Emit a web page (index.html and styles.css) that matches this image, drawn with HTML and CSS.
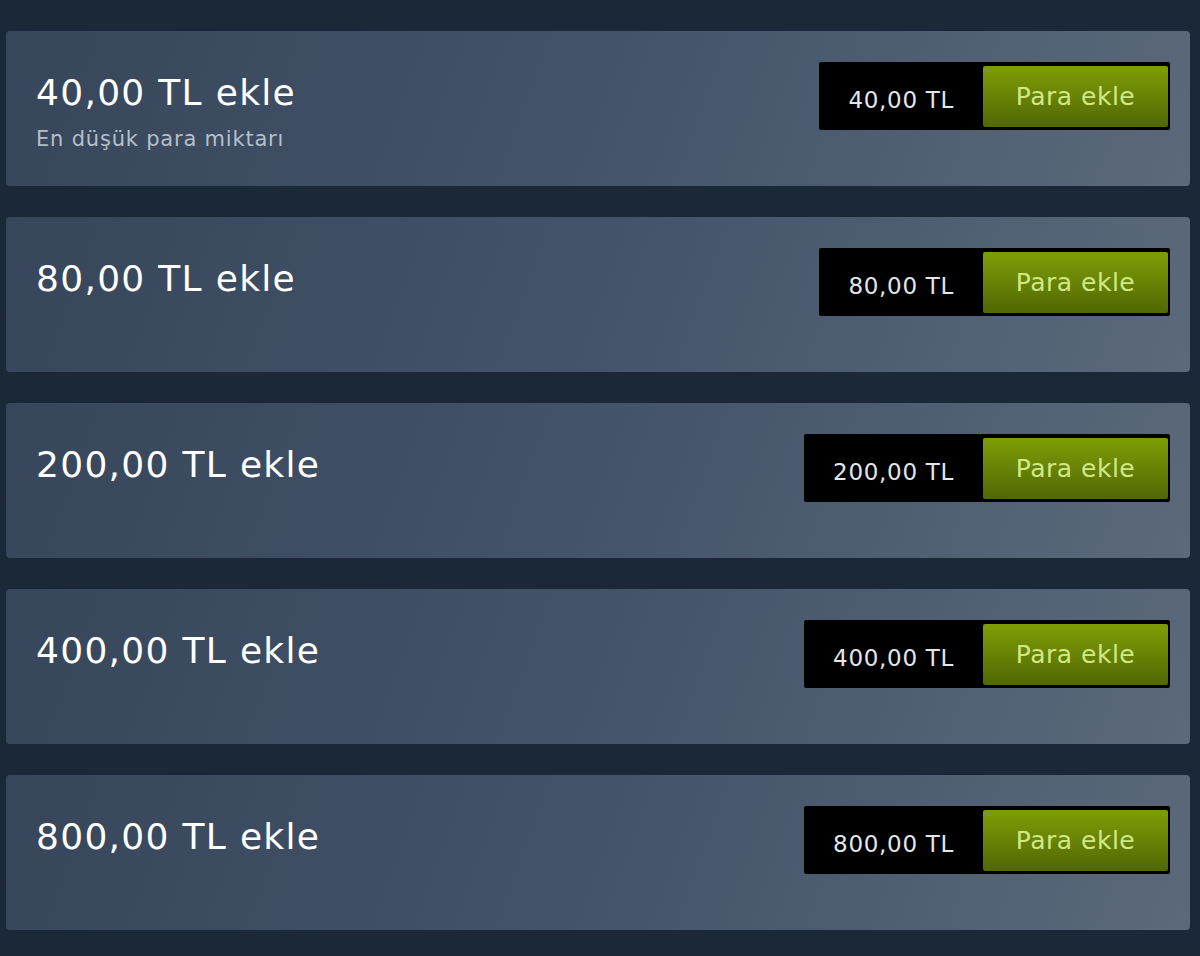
FILE: index.html
```html
<!DOCTYPE html>
<html lang="tr">
<head>
    <meta charset="UTF-8">
    <meta name="viewport" content="width=device-width, initial-scale=1.0">
    <title>Steam cüzdanına para ekle</title>
    <link rel="stylesheet" href="styles.css">
</head>
<body>
    <div class="wallet-list">
        <div class="wallet-item">
            <div class="wallet-info">
                <h2>40,00 TL ekle</h2>
                <p class="wallet-note">En düşük para miktarı</p>
            </div>
            <div class="purchase-box">
                <span class="price">40,00 TL</span>
                <a href="#" class="btn-green">Para ekle</a>
            </div>
        </div>
        <div class="wallet-item">
            <div class="wallet-info">
                <h2>80,00 TL ekle</h2>
            </div>
            <div class="purchase-box">
                <span class="price">80,00 TL</span>
                <a href="#" class="btn-green">Para ekle</a>
            </div>
        </div>
        <div class="wallet-item">
            <div class="wallet-info">
                <h2>200,00 TL ekle</h2>
            </div>
            <div class="purchase-box">
                <span class="price">200,00 TL</span>
                <a href="#" class="btn-green">Para ekle</a>
            </div>
        </div>
        <div class="wallet-item">
            <div class="wallet-info">
                <h2>400,00 TL ekle</h2>
            </div>
            <div class="purchase-box">
                <span class="price">400,00 TL</span>
                <a href="#" class="btn-green">Para ekle</a>
            </div>
        </div>
        <div class="wallet-item">
            <div class="wallet-info">
                <h2>800,00 TL ekle</h2>
            </div>
            <div class="purchase-box">
                <span class="price">800,00 TL</span>
                <a href="#" class="btn-green">Para ekle</a>
            </div>
        </div>
    </div>
</body>
</html>
```

FILE: styles.css
```css
/* Page */
body {
  margin: 0;
  background-color: #1b2838;
  font-family: "DejaVu Sans", Verdana, sans-serif;
  color: #ffffff;
}

.wallet-list {
  padding: 31px 10px 0 6px;
}

/* Each amount row */
.wallet-item {
  display: flex;
  justify-content: space-between;
  align-items: flex-start;
  height: 155px;
  box-sizing: border-box;
  margin-bottom: 31px;
  padding: 31px 20px 0 30px;
  border-radius: 4px;
  background: linear-gradient(110deg, #37465a 0%, #43536a 50%, #5b697a 100%);
}

.wallet-info h2 {
  margin: 0;
  padding-top: 11px;
  font-size: 36px;
  font-weight: 400;
  line-height: 40px;
  letter-spacing: 1.3px;
  color: #ffffff;
}

.wallet-note {
  margin: 13px 0 0;
  font-size: 21px;
  line-height: 26px;
  letter-spacing: 0.8px;
  color: #b4bfcb;
}

/* Price + button */
.purchase-box {
  display: flex;
  align-items: center;
  height: 68px;
  box-sizing: border-box;
  padding: 3px 2px 3px 0;
  border-radius: 2px;
  background-color: #000000;
}

.price {
  padding: 8px 29px 0;
  font-size: 23px;
  letter-spacing: 0.7px;
  color: #e2e6e9;
}

.btn-green {
  display: flex;
  align-items: center;
  justify-content: center;
  width: 185px;
  height: 61px;
  border-radius: 2px;
  background: linear-gradient(to bottom, #7c9c06 5%, #536904 95%);
  color: #d2e885;
  font-size: 25px;
  letter-spacing: 0.5px;
  text-decoration: none;
}
```
